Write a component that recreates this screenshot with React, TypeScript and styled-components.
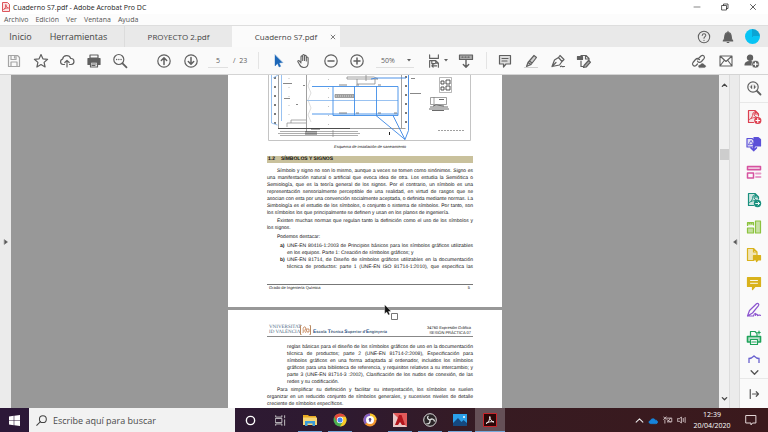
import React from "react";
import styled, { createGlobalStyle, css } from "styled-components";

const Global = createGlobalStyle`
  *, *::before, *::after { box-sizing: border-box; }
  html, body { margin: 0; height: 100%; overflow: hidden; }
  body { font-family: "Open Sans", "Noto Sans", sans-serif; color: #4a4a4a; background: #fafafa; }
  button, input, select { font: inherit; color: inherit; border: 0; background: none; padding: 0; margin: 0; }
  p, h2, figure { margin: 0; }
  svg { display: block; flex: none; }
`;

const Desktop = styled.div`
  height: 100vh;
  display: grid;
  grid-template-rows: 14px 11px 22px 28px minmax(0, 1fr) 24px;
`;

/* ---------- window frame ---------- */
const TitleBar = styled.header`
  display: flex;
  align-items: center;
  gap: 3px;
  padding: 0 10px 0 2px;
  background: #fff;
  font-size: 7px;
  color: #222;
`;
const WindowButtons = styled.div`
  margin-left: auto;
  display: flex;
  gap: 18px;
`;
const PlainButton = styled.button`
  display: flex;
  align-items: center;
  justify-content: center;
  min-width: 10px;
`;
const MenuBar = styled.nav`
  display: flex;
  align-items: center;
  gap: 7px;
  padding: 1px 4px 0;
  background: #fcfcfc;
  font-size: 7px;
  line-height: 8px;
  color: #555;
`;
const TabBar = styled.div`
  display: flex;
  background: #e9e9e9;
  border-top: 1px solid #dedede;
`;
const Tab = styled.button<{ $w: number; $active?: boolean; $large?: boolean }>`
  width: ${(p) => p.$w}px;
  font-size: ${(p) => (p.$large ? 9 : 8)}px;
  line-height: 20px;
  white-space: nowrap;
  color: #444;
  background: ${(p) => (p.$active ? "#fbfbfb" : "transparent")};
`;
const TabStrip = styled.div`
  display: flex;
  margin-left: 8px;
  border-left: 1px solid #dcdcdc;
`;
const ActiveTab = styled.div`
  display: flex;
  align-items: center;
  width: 108px;
  padding-left: 12px;
  background: #fbfbfb;
`;
const Account = styled.div`
  margin-left: auto;
  display: flex;
  align-items: center;
  gap: 10px;
  padding-right: 8px;
`;
const Avatar = styled.button`
  width: 15px;
  height: 15px;
  border-radius: 50%;
  background: conic-gradient(#0ba4d4 0 25%, #08c4f4 25% 100%);
`;

/* ---------- toolbar ---------- */
const Toolbar = styled.div`
  display: flex;
  align-items: center;
  background: #fafafa;
  border-bottom: 1px solid #d4d4d4;
  padding: 0 6px 0 4px;
  color: #606060;
`;
const ToolGroup = styled.div<{ $w: number; $ml?: number; $end?: boolean }>`
  display: flex;
  justify-content: space-between;
  width: ${(p) => p.$w}px;
  margin-left: ${(p) => (p.$end ? "auto" : `${p.$ml ?? 0}px`)};
`;
const ToolButton = styled.button<{ $dim?: boolean; $w?: number }>`
  display: flex;
  align-items: center;
  justify-content: center;
  gap: ${(p) => (p.$w ? 3 : 0)}px;
  width: ${(p) => p.$w ?? 20}px;
  height: 20px;
  opacity: ${(p) => (p.$dim ? 0.55 : 1)};
`;
const PageBox = styled.label`
  display: flex;
  align-items: center;
  gap: 5px;
  margin-left: 7px;
  width: 42px;
  font-size: 7px;
  white-space: nowrap;
`;
const PageInput = styled.input`
  width: 20px;
  height: 15px;
  text-align: center;
  border-bottom: 1px solid #e0e0e0;
`;
const Divider = styled.span<{ $ml: number }>`
  width: 1px;
  height: 17px;
  margin-left: ${(p) => p.$ml}px;
  background: #e4e4e4;
`;
const ZoomBox = styled.label`
  display: flex;
  align-items: center;
  justify-content: space-between;
  margin-left: 9px;
  width: 38px;
  height: 15px;
  padding: 0 3px 0 5px;
  border-bottom: 1px solid #e0e0e0;
`;
const ZoomSelect = styled.select`
  appearance: none;
  width: 22px;
  font-size: 7px;
`;

/* ---------- work area ---------- */
const WorkArea = styled.div`
  display: grid;
  grid-template-columns: 11px minmax(0, 1fr) 10px 11px 28px;
  min-height: 0;
`;
const Rail = styled.button<{ $edge?: boolean }>`
  display: flex;
  align-items: center;
  justify-content: center;
  background: #ebebeb;
  ${(p) => p.$edge && css`border: solid #dcdcdc; border-width: 0 1px;`}
`;
const Canvas = styled.main`
  position: relative;
  display: flex;
  flex-direction: column;
  align-items: center;
  gap: 3px;
  overflow: hidden;
  background: #989898;
`;
const Sheet = styled.article`
  flex: none;
  width: 274px;
  padding: 0 29px 0 39px;
  background: #fff;
  color: #111;
  font-family: "Liberation Sans", Arial, sans-serif;
  font-size: 5px;
  line-height: 7px;
  text-rendering: geometricPrecision;
`;
const Caption = styled.figcaption`
  padding-top: 2px;
  text-align: center;
  font-size: 4px;
  font-style: italic;
`;
const Heading = styled.h2`
  display: flex;
  gap: 6px;
  margin: 6px 0 5px;
  padding-left: 1px;
  background: #c9c19c;
  font-size: 5px;
  line-height: 7px;
  color: #111;
`;
const Para = styled.p<{ $inset?: boolean; $gap?: number }>`
  margin-top: ${(p) => p.$gap ?? 2}px;
  margin-left: ${(p) => (p.$inset ? 20 : 0)}px;
`;
const Line = styled.span<{ $first?: boolean; $last?: boolean }>`
  display: block;
  white-space: nowrap;
  padding-left: ${(p) => (p.$first ? 10 : 0)}px;
  text-align: justify;
  text-align-last: ${(p) => (p.$last ? "left" : "justify")};
`;
const Standards = styled.div`
  display: grid;
  grid-template-columns: 7px 1fr;
  margin: 2px 0 0 13px;
`;
const SheetFooter = styled.footer`
  display: flex;
  justify-content: space-between;
  margin-top: 13px;
  height: 23px;
  padding: 0 3px 0 2px;
  border-top: 1px solid #777;
  font-size: 4px;
  line-height: 5px;
`;
const SheetHeader = styled.header`
  display: flex;
  align-items: flex-end;
  margin-top: 16px;
  margin-bottom: 7px;
  height: 11px;
  padding: 0 2px 1px 2px;
  border-bottom: 1px solid #888;
  white-space: nowrap;
`;
const University = styled.span`
  width: 30px;
  font: 5px/5px "Liberation Serif", serif;
  color: #43627c;
  text-align: right;
`;
const School = styled.span`
  margin-left: 1px;
  font-size: 4px;
  line-height: 5px;
  font-weight: 700;
  color: #45607c;
  b { font-size: 5px; color: #1c4c86; }
`;
const Subject = styled.span`
  margin-left: auto;
  font-size: 4px;
  line-height: 5px;
  text-align: right;
`;
const Pointer = styled.svg`
  position: absolute;
  left: 373px;
  top: 229px;
`;
const ScrollBar = styled.div`
  display: flex;
  flex-direction: column;
  align-items: center;
  background: #f0f0f0;
`;
const ScrollButton = styled.button`
  display: flex;
  align-items: center;
  justify-content: center;
  width: 10px;
  height: 20px;
`;
const Thumb = styled.div`
  width: 9px;
  height: 11px;
  margin: 54px 0 auto;
  background: #cdcdcd;
`;
const Tools = styled.aside`
  display: grid;
  grid-template-rows: minmax(0, 1fr) 14px 12px 30px;
  background: #fafafa;
`;
const ToolList = styled.div`
  display: grid;
  grid-auto-rows: minmax(0, 1fr);
`;
const SideButton = styled.button<{ $line?: "top" | "bottom" }>`
  display: flex;
  align-items: center;
  justify-content: center;
  overflow: hidden;
  min-height: 0;
  ${(p) => p.$line === "top" && css`border-top: 1px solid #e8e8e8;`}
  ${(p) => p.$line === "bottom" && css`border-bottom: 1px solid #e8e8e8;`}
`;

/* ---------- taskbar ---------- */
const TaskBar = styled.footer`
  display: flex;
  align-items: stretch;
  background: linear-gradient(90deg, #2c1838, #2e1a30 45%, #371b22 65%, #3b191c);
  color: #fff;
`;
const StartButton = styled(PlainButton)`
  width: 29px;
`;
const Search = styled.label`
  display: flex;
  align-items: center;
  gap: 6px;
  width: 206px;
  padding-left: 7px;
  background: #f2f2f2;
  color: #444;
`;
const SearchInput = styled.input`
  flex: 1;
  min-width: 0;
  font-size: 9px;
  outline: 0;
  &::placeholder { color: #4a4a4a; opacity: 1; }
`;
const TaskButton = styled.button<{ $open?: boolean; $focus?: boolean }>`
  display: flex;
  align-items: center;
  justify-content: center;
  width: 30px;
  background:
    linear-gradient(#76a9dc, #76a9dc) center bottom / ${(p) => (p.$focus ? 30 : p.$open ? 24 : 0)}px 1px no-repeat
    ${(p) => (p.$focus ? "#655057" : "transparent")};
`;
const Tray = styled.div`
  margin-left: auto;
  display: flex;
  align-items: center;
  gap: 4px;
  padding-right: 11px;
`;
const Clock = styled.time`
  width: 42px;
  margin: 0 8px 0 0;
  text-align: center;
  font-size: 7px;
  line-height: 11px;
`;

/* ---------- icons ---------- */
type IconProps = { s?: number; c?: string; w?: number; children: React.ReactNode };
const Icon = ({ s = 16, c = "#606060", w = 1.2, children }: IconProps) => (
  <svg width={s} height={s} viewBox="0 0 16 16" fill="none" stroke={c} strokeWidth={w} strokeLinejoin="round" strokeLinecap="round" aria-hidden="true">
    {children}
  </svg>
);
const Caret = () => (
  <svg width="4" height="3" viewBox="0 0 4 3" aria-hidden="true"><path d="M0 0h4L2 2.6z" fill="#606060" /></svg>
);
const acro = "M3.500 10.500c2-1 3.500-3.500 3.300-6 0-1.200 1.300-1.200 1.200 0-.3 2 1.500 3.800 3.200 4M5 9.500c2-.9 3.500-1 6-1";

const fileTools: [string, React.ReactNode][] = [
  ["Guardar", <Icon><path d="M2.500 2.500h9l2 2v9h-11zM5 2.500v4h5v-4M5 13.500v-4.500h6v4.500M8.500 3.500v1.500" /></Icon>],
  ["Destacar", <Icon><path d="M8 1.500l1.900 4.300 4.700.5-3.500 3.100 1 4.600L8 11.600 3.900 14l1-4.600L1.400 6.300l4.700-.5z" /></Icon>],
  ["Subir", <Icon><path d="M5.500 11.500H4a2.700 2.700 0 0 1-.4-5.300A4.200 4.200 0 0 1 11.700 5.500a3 3 0 0 1 .5 6h-1.700M8 14V7.500M5.800 9.500L8 7.300l2.200 2.200" /></Icon>],
  ["Imprimir", <Icon><path d="M4 2h8v3H4z" /><path d="M2 5.500h12v6h-2.500V9h-7v2.500H2z" fill="#606060" /><path d="M4.500 9h7v5h-7zM6 11h4M6 12.500h3" /></Icon>],
  ["Buscar", <Icon><circle cx="6.800" cy="6.500" r="5" /><path d="M10.500 10.300l4 4" strokeWidth="1.800" /><path d="M4.600 6.500h.1M6.800 6.500h.1M9 6.500h.1" strokeWidth="1.300" /></Icon>],
];
const navTools: [string, React.ReactNode][] = [
  ["Página anterior", <Icon><circle cx="8" cy="8" r="6.200" /><path d="M8 11.500V5M5.300 7.500L8 4.800l2.700 2.700" strokeWidth="1.500" /></Icon>],
  ["Página siguiente", <Icon><circle cx="8" cy="8" r="6.200" /><path d="M8 4.500V11M5.300 8.500L8 11.200l2.700-2.700" strokeWidth="1.500" /></Icon>],
];
const viewTools: [string, React.ReactNode][] = [
  ["Seleccionar", <Icon c="#1c67b8"><path d="M5 2v11l2.500-2.500 1.600 3.500 1.600-.7-1.600-3.400 3.400-.3z" fill="#1c67b8" strokeWidth=".4" /></Icon>],
  ["Mano", <Icon w={1.1}><path d="M5 9V3.800c0-1.300 1.700-1.300 1.700 0V7.500 2.600c0-1.400 1.800-1.400 1.800 0v4.900-4.200c0-1.300 1.800-1.300 1.800 0V8 5c0-1.300 1.800-1.300 1.800 0v5c0 3-1.500 4.500-4.300 4.500-2.500 0-3.500-1.200-4.300-3L1.900 8.800c-.5-1.200.9-1.600 1.600-.7L5 10" /></Icon>],
  ["Reducir", <Icon><circle cx="8" cy="8" r="6.200" /><path d="M5 8h6" strokeWidth="1.500" /></Icon>],
  ["Ampliar", <Icon><circle cx="8" cy="8" r="6.200" /><path d="M5 8h6M8 5v6" strokeWidth="1.500" /></Icon>],
];
const markTools: [string, React.ReactNode][] = [
  ["Comentario", <Icon><path d="M2.500 2.500h11v8.500H9l-2.500 3v-3h-4z" fill="#9a9a9a" fillOpacity=".3" /><path d="M5 5.500h6M5 8h5" /></Icon>],
  ["Resaltar", <Icon><path d="M5 9.500L11 2.500l2.500 2L8 11.500zM5 9.500l-1.500 4 4.500-2M6.500 8l2.500 2" fill="#909090" fillOpacity=".4" /><path d="M1.500 14.500h13" stroke="#d0d0d0" /></Icon>],
  ["Firmar", <Icon><path d="M2 13.500l2.500-6.500 4-2.500 3.500 4-2.500 3.500zM2 13.500l4-4M8.500 4.500L10 2.500l4 4-2 2" /><path d="M10.500 13.500c1.500-1.500 1.500 1 3 0h1" /></Icon>],
  ["Sello", <Icon><path d="M5 8v5.500h4M5 4V2.500h5l3 3v2M9.500 2.500V6H13" /><path d="M1.500 3.500h5v3h-5z" fill="#606060" /><path d="M8 12.500l4.500-5 2 1.700-4.300 4.800-2.700.5z" fill="#aaa" /></Icon>],
];
const shareTools: [string, React.ReactNode][] = [
  ["Copiar enlace", <Icon><path d="M7 6l3-3c2-1.700 4.500.5 3 2.600L10.500 8.500C9 10 7 9.500 6.500 8M8.500 6.500c-1.500-1.500-3-1-4 0L2 9.500c-1.500 2 .8 4.500 3 3l1.500-1.500" /><path d="M8 14.500c-1.500-1.500.3-3 1.400-2.400.6-2 3.400-2 3.800 0 2 0 2 2.400.3 2.400z" fill="#606060" strokeWidth=".4" /></Icon>],
  ["Correo", <Icon w={1.1}><path d="M2 3h12v10H2zM2 3l6 5.500L14 3M2 13l4.500-6M14 13L9.500 7" /></Icon>],
  ["Compartir", <Icon><circle cx="6" cy="4.700" r="2.600" fill="#606060" /><path d="M1 12c.2-3 2.500-3.500 5-3.500 1.500 0 2 .2 2.500.8L7.500 12z" fill="#606060" /><circle cx="11.500" cy="11.200" r="3.800" fill="#606060" stroke="#fafafa" strokeWidth=".6" /><path d="M11.500 9.400V13M9.700 11.200h3.600" stroke="#fff" /></Icon>],
];
const sideTools: [string, React.ReactNode][] = [
  ["Buscar herramientas", <Icon><circle cx="7" cy="7" r="5.200" /><path d="M11 11l3.500 3.500" strokeWidth="1.800" /><path d="M6 5v4L4.200 7zM8 5v4l1.800-2z" fill="#606060" strokeWidth=".3" /></Icon>],
  ["Crear PDF", <Icon c="#dc4050"><path d="M7.500 13.500h-5v-12h6.500l3.500 3.500v2M9 1.500V5h3.500" fill="#dc4050" fillOpacity=".12" /><path d={acro} strokeWidth=".9" /><circle cx="11.800" cy="11.500" r="3.600" fill="#dc4050" stroke="none" /><path d="M11.800 9.700v3.600M10 11.500h3.600" stroke="#fff" /></Icon>],
  ["Combinar archivos", <Icon c="#5b50d8"><path d="M1 2.500h5l2.500 2V11H1z" fill="#5b50d8" fillOpacity=".15" /><path d="M8 1.500h4l2.500 2V10H8z" fill="#5b50d8" /><path d="M2.500 8.500l2.500-4 2 3.500z" strokeWidth=".8" /><path d="M7.700 8v6.500M5 11.800l2.700 2.700 2.700-2.700" strokeWidth="1.700" /></Icon>],
  ["Organizar páginas", <Icon c="#d652a0" w={1.5}><path d="M1.500 2.500h13v3.200h-13z" fill="#d652a0" fillOpacity=".3" /><path d="M1.500 9h6v5h-6z" /><path d="M10 9.500h4.500M10 13h4.500" strokeWidth="1.800" stroke="#e79bc8" /></Icon>],
  ["Exportar PDF", <Icon c="#19907e"><path d="M7.500 13.500h-5v-12h6.500l3.500 3.500v2M9 1.500V5h3.500" fill="#19907e" fillOpacity=".2" /><path d={acro} strokeWidth=".9" /><circle cx="11.500" cy="11.500" r="3.700" fill="#19907e" stroke="none" /><path d="M9.700 11.500h3.500M12 10l1.500 1.500L12 13" stroke="#fff" strokeWidth=".9" /></Icon>],
  ["Editar PDF", <Icon c="#8cc33f"><path d="M9.500 2h5v12h-5z" fill="#8cc33f" fillOpacity=".45" /><path d="M7.500 14h-6V9h6zM1.500 6.500V3.500h6V6M3 4.700h1M5.500 4.700h.3" fill="#8cc33f" fillOpacity=".5" /></Icon>],
  ["Añadir nota", <Icon c="#d9b21c"><path d="M7.500 13.500h-6v-12h6L11 5v3M7.500 1.500V5H11" fill="#d9b21c" fillOpacity=".3" /><path d="M7.500 8.500h7v4.500H12l-1.500 1.500V13h-3z" fill="#d9b21c" /></Icon>],
  ["Comentar", <Icon c="#d9b21c"><path d="M1.500 2.500h13v9H9l-2.500 3v-3h-5z" fill="#d9b21c" /><path d="M4.500 5.500h7M4.500 8.300h7" stroke="#fff" strokeWidth=".9" /></Icon>],
  ["Rellenar y firmar", <Icon c="#8c54cf"><path d="M1.500 14l2-5.500L10.500 1.700c1.200-1 3 .6 2 2L6.500 11l-5 3zM1.500 14h6c1-3.500 2.500-3 2-.7 1-1.700 2.300-1.300 2 .4.900-.9 1.800-.5 3-.4" /></Icon>],
  ["Producción de impresión", <Icon c="#1fa35a"><path d="M1.500 6.500h13v5.500h-13z" fill="#1fa35a" fillOpacity=".3" strokeWidth="1.600" /><path d="M4.500 9.500h7v5h-7z" fill="#fafafa" /><path d="M4.500 6.500v-5h4.500l2 2v3M6 12h4M13 1v3M11.800 2.500h2.400" /></Icon>],
];

const EngineeringPlan = () => (
  <svg width="206" height="66" viewBox="0 0 206 66" fill="none" role="img" aria-label="Plano de saneamiento">
    <path d="M1.500 0v65.500H203.500V0" stroke="#c4c4c4" />
    <path d="M11.500 0v53.500H138.500M39.500 0v57M134.500 0v53" stroke="#777" strokeWidth=".7" />
    <path d="M11 53.500h72" stroke="#444" strokeWidth=".9" />
    <path d="M8 2v48M139 1v52" stroke="#333" strokeWidth="1.300" strokeDasharray="2 7" />
    <path d="M22 3v44M61.500 4v46" stroke="#999" strokeWidth=".6" strokeDasharray="1 8" />
    <path d="M20 52v-4h4v-3h15M39 48H24" stroke="#888" strokeWidth=".7" />
    <path d="M13 56.500h78M13 60.500h78M66 55v7M11 58.500h82" stroke="#777" strokeWidth=".6" />
    <path d="M39 56v4M41 56v4M43 56v4M45 56v4M47 56v4M49 56v4M44 54h9" stroke="#333" strokeWidth=".8" />
    <path d="M68 19.500h19v3H68z" fill="#bbb" stroke="#777" strokeWidth=".6" />
    <path d="M70 21h15" stroke="#666" strokeDasharray="1 1" strokeWidth=".7" />
    <path d="M80 2h27l4 2H80zM90 4v5h18V4M99 0v6" stroke="#888" strokeWidth=".8" />
    <path d="M4.500 0v48l6 2M14.500 0v46M11 0l-5 3M40 25.500h91" stroke="#7fb2ee" strokeWidth=".8" />
    <path d="M45 11.500h86v29H66v-29M45 39h86M87.500 11v30M109.500 11v30" stroke="#3f8de8" strokeWidth=".9" />
    <path d="M109 40.500l29 24-12-24M138 64.500l3.500-9V0M139 3h-30l-5 1" stroke="#3b86e4" strokeWidth=".9" />
    <path d="M72 10h8M89 10h3M111 10h3M72 38h8M89 38h3M111 38h3M127 38h3M16 8.500h9M17 23.500h6M143 18.500h11M144 3.500h4M36 10.500h2M29 29.500h2" stroke="#555" strokeWidth=".7" />
    <path d="M43 5l-2 6 3 7-3 7 3 8-3 7 3 7" stroke="#c6c6c6" strokeWidth=".6" />
    <path d="M172.500 2.500h12v15h-12z" stroke="#999" strokeWidth=".7" />
    <path d="M174 6h3v3h-3zM179 5h4v4h-4zM174 12h3v3h-3zM179 11h4v4h-4z" stroke="#444" strokeWidth=".9" />
    <path d="M163.500 22.500h16v7h-16zM167 22v7" stroke="#777" strokeWidth=".7" />
    <path d="M172 24.500h5M163 32h18M162 34h20M165 35.500h12M166 31l3-1 8 1" stroke="#444" strokeWidth=".8" />
    <path d="M171 55.500h27" stroke="#777" strokeWidth=".7" strokeDasharray="2 1" />
    <path d="M122.500 57v3" stroke="#222" />
  </svg>
);

const Lines = ({ rows, indent, open }: { rows: string[]; indent?: boolean; open?: boolean }) => (
  <>
    {rows.map((t, i) => (
      <Line key={t} $first={indent && i === 0} $last={!open && i === rows.length - 1}>{t}</Line>
    ))}
  </>
);

const renderTools = (tools: [string, React.ReactNode][]) =>
  tools.map(([name, icon]) => (
    <ToolButton key={name} aria-label={name} $dim={name === "Guardar"}>{icon}</ToolButton>
  ));

export default function App() {
  return (
    <Desktop>
      <Global />
      <TitleBar>
        <svg width="8" height="10" viewBox="0 0 8 10" fill="none" stroke="#d9434b" strokeWidth=".9" aria-hidden="true">
          <path d="M.5.500h5l2 2v7h-7z" fill="#fbe5e5" /><path d="M1.500 7.500c2-1 2.500-3 2.300-5 .2 2 1 3 2.700 3.500-2-.3-3.500.3-5 1.500z" />
        </svg>
        <span>Cuaderno S7.pdf - Adobe Acrobat Pro DC</span>
        <WindowButtons>
          <PlainButton aria-label="Minimizar"><Icon s={8} c="#333"><path d="M2 8h12" /></Icon></PlainButton>
          <PlainButton aria-label="Restaurar"><Icon s={8} c="#333" w={1.6}><path d="M2 5h9v9H2zM5 5V2h9v9h-3" /></Icon></PlainButton>
          <PlainButton aria-label="Cerrar"><Icon s={8} c="#333" w={1.6}><path d="M3 3l10 10M13 3L3 13" /></Icon></PlainButton>
        </WindowButtons>
      </TitleBar>
      <MenuBar>
        {["Archivo", "Edición", "Ver", "Ventana", "Ayuda"].map((m) => <PlainButton key={m}>{m}</PlainButton>)}
      </MenuBar>
      <TabBar>
        <Tab $w={41} $large>Inicio</Tab>
        <Tab $w={75} $large>Herramientas</Tab>
        <TabStrip><Tab $w={107}>PROYECTO 2.pdf</Tab></TabStrip>
        <ActiveTab>
          <Tab $w={84} $active>Cuaderno S7.pdf</Tab>
          <PlainButton aria-label="Cerrar pestaña"><Icon s={6} w={2.2}><path d="M3 3l10 10M13 3L3 13" /></Icon></PlainButton>
        </ActiveTab>
        <Account>
          <PlainButton aria-label="Ayuda"><Icon s={14}><circle cx="8" cy="8" r="6.500" /><path d="M6 6.200c.2-2.700 4.200-2.400 4 0C9.900 7.600 8 7.600 8 9.500M8 11.800v.1" /></Icon></PlainButton>
          <PlainButton aria-label="Notificaciones"><Icon s={14}><path d="M2.500 12.500c2-1.500 1.500-4 2-6.500.4-2 2-3 3.500-3s3.100 1 3.500 3c.5 2.500 0 5 2 6.500zM7 14.300h2M8 1.500V3" fill="#606060" /></Icon></PlainButton>
          <Avatar aria-label="Cuenta" />
        </Account>
      </TabBar>
      <Toolbar>
        <ToolGroup $w={126}>{renderTools(fileTools)}</ToolGroup>
        <ToolGroup $w={47} $ml={24}>{renderTools(navTools)}</ToolGroup>
        <PageBox><PageInput aria-label="Página" defaultValue="5" /><span>/&nbsp; 23</span></PageBox>
        <Divider $ml={8} />
        <ToolGroup $w={99} $ml={9}>{renderTools(viewTools)}</ToolGroup>
        <ZoomBox><ZoomSelect aria-label="Zoom"><option>50%</option></ZoomSelect><Caret /></ZoomBox>
        <ToolGroup $w={26} $ml={10}>
          <ToolButton aria-label="Ajustar página" $w={26}>
            <Icon s={14} w={1.3}><path d="M3 1v4h10V1M3 15V7.500h7l3 3V15M5.500 8v3H9M10 7.500v3h3M6 13.500h5M7 12l-1.500 1.500L7 15" /></Icon>
            <Caret />
          </ToolButton>
        </ToolGroup>
        <ToolGroup $w={20} $ml={6}>
          <ToolButton aria-label="Modo de lectura"><Icon><path d="M1.500 2h13v4.500h-13z" fill="#aaa" /><path d="M4 4.200h8" strokeDasharray="1 2" /><path d="M8 7v7M5.300 11.500L8 14.200l2.700-2.700" strokeWidth="1.400" /></Icon></ToolButton>
        </ToolGroup>
        <Divider $ml={10} />
        <ToolGroup $w={99} $ml={8}>{renderTools(markTools)}</ToolGroup>
        <ToolGroup $w={73} $end>{renderTools(shareTools)}</ToolGroup>
      </Toolbar>

      <WorkArea>
        <Rail aria-label="Mostrar panel de navegación"><Icon s={6} c="#555"><path d="M4 2l8 6-8 6z" fill="#555" /></Icon></Rail>
        <Canvas>
          <Sheet>
            <figure>
              <EngineeringPlan />
              <Caption>Esquema de instalación de saneamiento</Caption>
            </figure>
            <Heading><span>1.2</span><span>SÍMBOLOS Y SIGNOS</span></Heading>
            <Para>
              <Lines indent rows={[
                "Símbolo y signo no son lo mismo, aunque a veces se tomen como sinónimos. Signo es",
                "una manifestación natural o artificial que evoca idea de otra. Los estudia la Semiótica o",
                "Semiología, que es la teoría general de los signos. Por el contrario, un símbolo es una",
                "representación sensorialmente perceptible de una realidad, en virtud de rasgos que se",
                "asocian con esta por una convención socialmente aceptada, o definida mediante normas. La",
                "Simbología es el estudio de los símbolos, o conjunto o sistema de símbolos. Por tanto, son",
                "los símbolos los que principalmente se definen y usan en los planos de ingeniería.",
              ]} />
            </Para>
            <Para $gap={1}>
              <Lines indent rows={["Existen muchas normas que regulan tanto la definición como el uso de los símbolos y", "los signos."]} />
            </Para>
            <Para><Lines indent rows={["Podemos destacar:"]} /></Para>
            <Standards>
              <b>a)</b>
              <div><Lines rows={["UNE-EN 80416-1:2003 de Principios básicos para los símbolos gráficos utilizables", "en los equipos. Parte 1: Creación de símbolos gráficos; y"]} /></div>
              <b>b)</b>
              <div><Lines open rows={["UNE-EN 81714, de Diseño de símbolos gráficos utilizables en la documentación", "técnica de productos: parte 1 (UNE-EN ISO 81714-1:2010), que especifica las"]} /></div>
            </Standards>
            <SheetFooter><span>Grado de Ingeniería Química</span><span>5</span></SheetFooter>
          </Sheet>
          <Sheet>
            <SheetHeader>
              <University>VNIVERSITAT<br />ID VALÈNCIA</University>
              <svg width="13" height="10" viewBox="0 0 13 10" fill="none" aria-hidden="true">
                <path d="M2.500.500h-1v9h1M10.500.500h1v9h-1" stroke="#b98a62" /><path d="M4 8c1-3-1-4 1-6 2-1 2 2 1 3s1 3 1 3M7 4h3v3H8z" stroke="#c07a4a" strokeWidth=".8" />
              </svg>
              <School><b>E</b>scola <b>T</b>ècnica <b>S</b>uperior d'<b>E</b>nginyeria</School>
              <Subject>34760 Expresión Gráfica<br />SESIÓN PRÁCTICA 07</Subject>
            </SheetHeader>
            <Para $inset $gap={0}>
              <Lines rows={[
                "reglas básicas para el diseño de los símbolos gráficos de uso en la documentación",
                "técnica de productos; parte 2 (UNE-EN 81714-2:2008), Especificación para",
                "símbolos gráficos en una forma adaptada al ordenador, incluidos los símbolos",
                "gráficos para una biblioteca de referencia, y requisitos relativos a su intercambio; y",
                "parte 3 (UNE-EN 81714-3 :2002), Clasificación de los nudos de conexión, de las",
                "redes y su codificación.",
              ]} />
            </Para>
            <Para $gap={1}>
              <Lines indent rows={[
                "Para simplificar su definición y facilitar su interpretación, los símbolos se suelen",
                "organizar en un reducido conjunto de símbolos generales, y sucesivos niveles de detalle",
                "creciente de símbolos específicos.",
              ]} />
            </Para>
          </Sheet>
          <Pointer width="16" height="18" viewBox="0 0 16 18" aria-hidden="true">
            <path d="M.7.700v9l2-1.700 1.600 3 1.500-.8L4.400 7.500l2.600-.3z" fill="#111" stroke="#fff" strokeWidth=".3" />
            <path d="M7.500 9.500h6v6h-6z" fill="#fff" stroke="#777" />
          </Pointer>
        </Canvas>
        <ScrollBar>
          <ScrollButton aria-label="Subir"><Icon s={7} c="#444" w={3}><path d="M3 10l5-5 5 5" /></Icon></ScrollButton>
          <Thumb />
          <ScrollButton aria-label="Bajar"><Icon s={7} c="#444" w={3}><path d="M3 6l5 5 5-5" /></Icon></ScrollButton>
        </ScrollBar>
        <Rail $edge aria-label="Ocultar panel de herramientas"><Icon s={6} c="#555"><path d="M12 2L4 8l8 6z" fill="#555" /></Icon></Rail>
        <Tools>
          <ToolList>
            {sideTools.map(([name, icon], i) => (
              <SideButton key={name} aria-label={name} $line={i === 0 ? "bottom" : undefined}>{icon}</SideButton>
            ))}
          </ToolList>
          <SideButton aria-label="Proteger">
            <svg width="14" height="8" viewBox="0 0 14 8" fill="none" stroke="#6a62cf" strokeWidth="1.300" aria-hidden="true"><path d="M2 8V3.500C4 3.500 5.500 2.500 7 1c1.500 1.500 3 2.500 5 2.500V8" /></svg>
          </SideButton>
          <SideButton aria-label="Más herramientas"><Icon s={9} c="#555" w={2.4}><path d="M2 5l6 6 6-6" /></Icon></SideButton>
          <SideButton aria-label="Contraer" $line="top"><Icon s={12} c="#555" w={1.6}><path d="M3 2v12M6 8h8M11 5l3 3-3 3" /></Icon></SideButton>
        </Tools>
      </WorkArea>

      <TaskBar>
        <StartButton aria-label="Inicio">
          <svg width="11" height="11" viewBox="0 0 11 11" fill="#fff" aria-hidden="true"><path d="M0 1.500l4.700-.7v4.400H0zM5.300.700L11 0v5.200H5.300zM0 5.800h4.700v4.400L0 9.500zM5.300 5.800H11V11l-5.700-.8z" /></svg>
        </StartButton>
        <Search>
          <Icon s={11} c="#444" w={1.5}><circle cx="10" cy="6" r="5" /><path d="M6.500 9.500L1 15" /></Icon>
          <SearchInput placeholder="Escribe aquí para buscar" aria-label="Buscar" />
        </Search>
        <TaskButton aria-label="Cortana"><Icon s={11} c="#fff" w={2}><circle cx="8" cy="8" r="6" /></Icon></TaskButton>
        <TaskButton aria-label="Vista de tareas"><Icon s={11} c="#ddd"><path d="M1 5h9v6H1zM1 1v2h9V1M1 15v-2h9v2M14 1v3M14 7v8" /></Icon></TaskButton>
        <TaskButton $open aria-label="Explorador">
          <svg width="14" height="12" viewBox="0 0 14 12" aria-hidden="true"><path d="M0 1h5l1 1h7v8H0z" fill="#e9a921" /><path d="M0 3.500h14V11H0z" fill="#f8d775" /><path d="M2 7h10v5H9.500V9.500h-5V12H2z" fill="#3c9bd8" /></svg>
        </TaskButton>
        <TaskButton $open aria-label="Chrome">
          <svg width="14" height="14" viewBox="0 0 14 14" aria-hidden="true"><circle cx="7" cy="7" r="6.500" fill="#4caf50" /><path d="M1.400 3.700A6.500 6.500 0 0 1 12.600 3.700H7L4 8.700z" fill="#e5483a" /><path d="M7 3.700h5.600A6.500 6.500 0 0 1 7 13.500l3-5z" fill="#fbc928" /><circle cx="7" cy="7" r="3.200" fill="#fff" /><circle cx="7" cy="7" r="2.500" fill="#4285f4" /></svg>
        </TaskButton>
        <TaskButton aria-label="Navegador seguro">
          <svg width="14" height="14" viewBox="0 0 14 14" aria-hidden="true"><circle cx="7" cy="7" r="6.500" fill="#f2952f" /><path d="M7 .5A6.500 6.500 0 0 0 2 11.200L7 7z" fill="#8460c4" /><path d="M7 .5a6.500 6.500 0 0 1 6.500 6.500H7z" fill="#f6c52d" /><circle cx="7" cy="7" r="4" fill="#fff" /><circle cx="7" cy="6.400" r="1.300" fill="#5a4a8a" /><path d="M6.400 7h1.200v2H6.400z" fill="#5a4a8a" /></svg>
        </TaskButton>
        <TaskButton $open aria-label="AutoCAD">
          <svg width="14" height="14" viewBox="0 0 14 14" aria-hidden="true"><path d="M0 0h14v14H0z" fill="#e9c9c9" /><path d="M0 0h14v14z" fill="#e25b5b" /><path d="M2 12L6 2h2.500L12 12H9L7 9l-2 3z" fill="#b3151d" /></svg>
        </TaskButton>
        <TaskButton $open aria-label="OBS">
          <svg width="14" height="14" viewBox="0 0 14 14" fill="none" stroke="#ddd" aria-hidden="true"><circle cx="7" cy="7" r="6.300" fill="#2b2528" /><path d="M7 7c-3-.5-3-3-1.500-4M7 7c2-2 4.500-.5 4.500 1.500M7 7c.5 3-1.500 4.500-3.500 3.500" strokeWidth="1.300" /></svg>
        </TaskButton>
        <TaskButton $open aria-label="Fotos">
          <svg width="14" height="12" viewBox="0 0 14 12" aria-hidden="true"><path d="M0 0h14v12H0z" fill="#2aa0ea" /><path d="M0 9l5-5 3.500 4L10.500 6l3.500 3v3H0z" fill="#15487f" /><circle cx="11" cy="3" r="1" fill="#fff" /></svg>
        </TaskButton>
        <TaskButton $open $focus aria-label="Acrobat">
          <svg width="14" height="14" viewBox="0 0 14 14" fill="none" aria-hidden="true"><path d="M.5.500h13v13H.5z" fill="#2b0707" stroke="#c8252b" /><path d="M3 10.500c2.500-1 4-4 3.800-7 .2 3 1.700 5 4.200 5.500-3-.7-5.500-.2-8 1.500z" stroke="#fff" strokeWidth=".9" /></svg>
        </TaskButton>
        <Tray>
          <PlainButton aria-label="Iconos ocultos"><Icon s={9} c="#eee" w={1.8}><path d="M2 11l6-6 6 6" /></Icon></PlainButton>
          <PlainButton aria-label="OneDrive"><Icon s={11} c="#1684dc"><path d="M3.500 12.500c-3-.3-2.500-4 0-4 .7-3.500 5.500-4 7-1 3.500-.5 5 4.500 1.500 5z" fill="#1684dc" /></Icon></PlainButton>
          <PlainButton aria-label="Batería"><Icon s={10} c="#d8c8ca" w={1.4}><path d="M5 5h9v6H7M1 3l4 4M5 3L1 7M3 8v5M7 8l5 3M12 5l-4 5" /></Icon></PlainButton>
          <PlainButton aria-label="Volumen"><Icon s={10} c="#d8c8ca" w={1.4}><path d="M1 6h3l3-3v10l-3-3H1zM10 5.500v5M13 4v8" /></Icon></PlainButton>
          <Clock>12:39<br />20/04/2020</Clock>
          <PlainButton aria-label="Notificaciones"><Icon s={12} c="#e8dcdc" w={1.3}><path d="M1.500 2h13v10H10l-2 2.500V12H1.500z" /></Icon></PlainButton>
        </Tray>
      </TaskBar>
    </Desktop>
  );
}
